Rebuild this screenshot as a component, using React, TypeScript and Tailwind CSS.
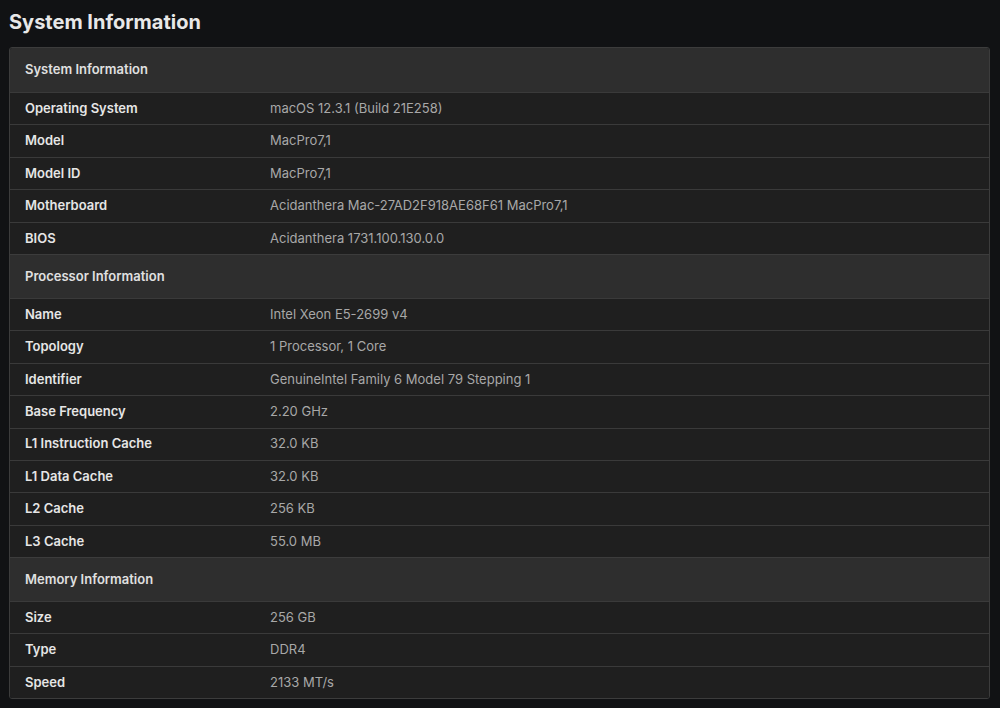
const sections: [string, [string, string][]][] = [
  ["System Information", [
    ["Operating System", "macOS 12.3.1 (Build 21E258)"],
    ["Model", "MacPro7,1"],
    ["Model ID", "MacPro7,1"],
    ["Motherboard", "Acidanthera Mac-27AD2F918AE68F61 MacPro7,1"],
    ["BIOS", "Acidanthera 1731.100.130.0.0"],
  ]],
  ["Processor Information", [
    ["Name", "Intel Xeon E5-2699 v4"],
    ["Topology", "1 Processor, 1 Core"],
    ["Identifier", "GenuineIntel Family 6 Model 79 Stepping 1"],
    ["Base Frequency", "2.20 GHz"],
    ["L1 Instruction Cache", "32.0 KB"],
    ["L1 Data Cache", "32.0 KB"],
    ["L2 Cache", "256 KB"],
    ["L3 Cache", "55.0 MB"],
  ]],
  ["Memory Information", [
    ["Size", "256 GB"],
    ["Type", "DDR4"],
    ["Speed", "2133 MT/s"],
  ]],
];

export default function App() {
  return (
    <div className="w-[1000px] h-[708px] bg-[#111214] overflow-hidden" style={{ fontFamily: "Inter, 'Liberation Sans', sans-serif" }}>
      <h1 className="pl-[9px] pt-[9px] h-[47px] text-[20px] leading-[26px] font-bold text-[#e8e8e8]">System Information</h1>
      <div className="ml-[9px] w-[981px] border border-[#3c3c3c] rounded-[3px] overflow-hidden">
        {sections.map(([title, rows], si) => (
          <div key={title}>
            <div className={`h-[44px] flex items-center pl-[15px] bg-[#2e2e2e] text-[13px] font-semibold text-[#e0e0e0] ${si > 0 ? "border-t border-[#3c3c3c]" : ""}`}>{title}</div>
            {rows.map(([k, v]) => (
              <div key={k} className="h-[32.4px] flex items-center border-t border-[#3a3a3a] bg-[#1f1f1f] text-[13px]">
                <div className="w-[260px] pl-[15px] font-semibold text-[#e6e6e6]">{k}</div>
                <div className="text-[#a8a8a8]">{v}</div>
              </div>
            ))}
          </div>
        ))}
      </div>
    </div>
  );
}
